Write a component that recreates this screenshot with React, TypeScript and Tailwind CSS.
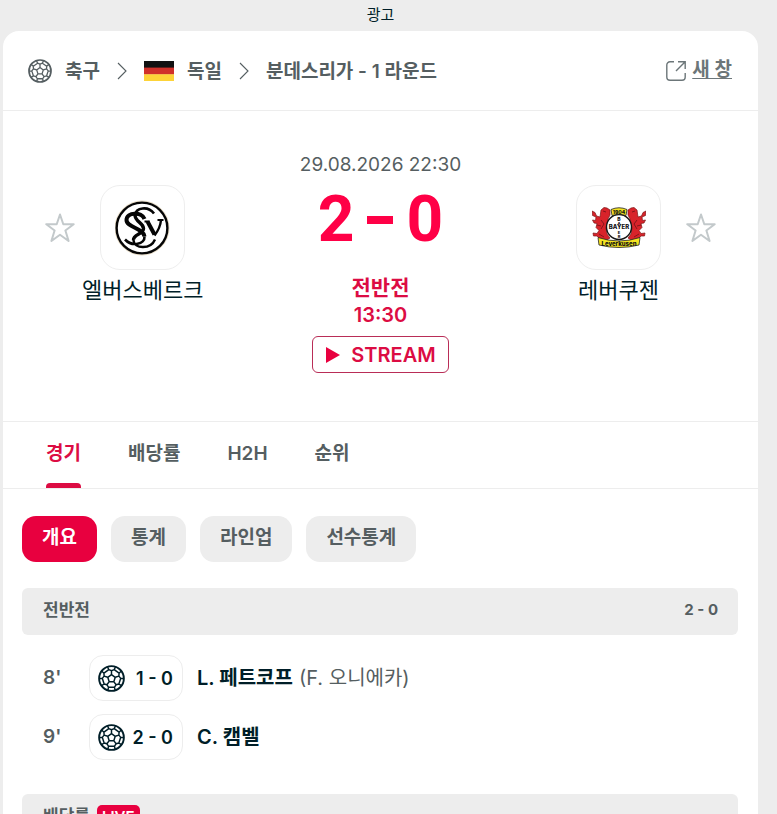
import React from "react";

const point = (radius: number, degrees: number) => {
  const a = (degrees * Math.PI) / 180;
  return `${(12 + radius * Math.cos(a)).toFixed(2)} ${(12 + radius * Math.sin(a)).toFixed(2)}`;
};

const directions = [-90, -18, 54, 126, 198];

const ballSeams =
  `M${directions.map((d) => point(3.5, d)).join("L")}Z` +
  directions
    .map(
      (d) =>
        `M${point(3.5, d)}L${point(6.9, d)}` +
        `M${point(11, d - 19)}L${point(8.2, d - 17)}L${point(6.9, d)}L${point(8.2, d + 17)}L${point(11, d + 19)}` +
        `M${point(8.2, d + 17)}L${point(8.2, d + 55)}`,
    )
    .join("");

function Ball({ className }: { className: string }) {
  return (
    <svg viewBox="0 0 24 24" fill="none" stroke="currentColor" strokeWidth="1.7" className={className} aria-hidden="true">
      <circle cx="12" cy="12" r="11" />
      <path d={ballSeams} strokeWidth="1.3" strokeLinejoin="round" />
    </svg>
  );
}

function Chevron() {
  return (
    <svg viewBox="0 0 10 18" className="h-[18px] w-[10px] text-[#555e61]" fill="none" stroke="currentColor" strokeWidth="1.1" aria-hidden="true">
      <path d="M1 1l8 8-8 8" />
    </svg>
  );
}

function GermanFlag() {
  return (
    <svg viewBox="0 0 30 20" className="h-5 w-[30px]" aria-hidden="true">
      <rect width="30" height="7" fill="#111" />
      <rect y="6.6" width="30" height="7" fill="#d0302a" />
      <rect y="13.3" width="30" height="6.7" fill="#fdd338" />
    </svg>
  );
}

function NewWindowIcon() {
  return (
    <svg viewBox="0 0 20 20" className="size-5" fill="none" stroke="currentColor" strokeWidth="1.4" aria-hidden="true">
      <path d="M8 .8H4A3.2 3.2 0 0 0 .8 4v12A3.2 3.2 0 0 0 4 19.2h12a3.2 3.2 0 0 0 3.2-3.2V12" />
      <path d="M12 .8h7.2V8M19.2 .8L10 10" />
    </svg>
  );
}

function Star() {
  return (
    <svg viewBox="0 0 30 30" className="size-[30px]" fill="none" stroke="#c3c9cb" strokeWidth="2" strokeLinejoin="round" aria-hidden="true">
      <path d="M15 1.500l3.300 9.700h10.400l-8.300 6.300 3.200 10.500-8.600-6.300-8.600 6.300 3.200-10.500-8.300-6.300h10.400z" />
    </svg>
  );
}

function ElversbergCrest() {
  return (
    <svg viewBox="0 0 56 56" className="size-14" fill="none" stroke="#050505" aria-hidden="true">
      <circle cx="27" cy="28" r="27" stroke="#e9dcc3" strokeWidth="1" />
      <circle cx="27" cy="28" r="25.400" strokeWidth="2.400" />
      <path d="M39 13.500C33 5.500 21 7.500 20 15" strokeWidth="2.600" />
      <path d="M20 15c0 7 8.500 7.500 8.500 13.500S18 34 18.500 40" strokeWidth="3.400" />
      <path d="M18.500 40c.5 9 17 10 21.500-.5" strokeWidth="2.400" />
      <path d="M29.500 19C27 11.500 11.500 12 11.500 20c0 7.500 17 8 18 16.500" strokeWidth="4" />
      <path d="M29.500 36.500C30 44.500 17 47 10 39.500" strokeWidth="2.600" />
      <path d="M29.500 21.500h5M42.500 20h6" strokeWidth="1.800" />
      <path d="M32.500 21.500l7 13" strokeWidth="4" />
      <path d="M39.500 35.500C43 31 45.500 26 46 20" strokeWidth="2.400" />
    </svg>
  );
}

function Lion() {
  return (
    <g>
      <path
        d="M9 3l3-2.500 3 .5 3 2v5l-2 4 1 4-3 5 1 6 3 4-3 2-7-1-3-3H1.500l-.5-3 4 .5 2-3-3-3 1-4-3-.5-1.500-3 3 .5L4 10 .5 8.500 0 4l3 1.500L4.500 9 8 10z"
        fill="#d8232a"
        stroke="#7c1717"
        strokeWidth=".7"
        strokeLinejoin="round"
      />
      <path d="M11 4l3 1M9 13l3 4-3 5M7 27l5 3M5 18l4 1" stroke="#7c1318" strokeWidth=".9" fill="none" />
    </g>
  );
}

function LeverkusenCrest() {
  return (
    <svg viewBox="0 0 54 42" className="h-[42px] w-[54px]" aria-hidden="true">
      <Lion />
      <g transform="translate(54 0) scale(-1 1)">
        <Lion />
      </g>
      <circle cx="27" cy="20" r="12.500" fill="#fff" stroke="#151515" strokeWidth="1.400" />
      <path d="M19 2.500q8-3.500 16 0l-1 6q-7-3-14 0z" fill="#f4e321" stroke="#222" strokeWidth=".8" />
      <path d="M6 30.500q21 7 42 0l-1 7.500q-20 5-40 0z" fill="#f4e321" stroke="#222" strokeWidth=".8" />
      <g fill="#111" fontFamily="Inter, sans-serif" fontWeight="800" textAnchor="middle">
        <text x="27" y="7" fontSize="5">1904</text>
        <text x="27" y="22.300" fontSize="6">BAYER</text>
        <text x="27" y="13.600" fontSize="5">B</text>
        <text x="27" y="17.600" fontSize="4">A</text>
        <text x="27" y="26.600" fontSize="4">E</text>
        <text x="27" y="31" fontSize="4">R</text>
        <text x="27" y="38.800" fontSize="6">Leverkusen</text>
      </g>
    </svg>
  );
}

function FavouriteButton({ team }: { team: string }) {
  return (
    <button type="button" aria-label={team}>
      <Star />
    </button>
  );
}

function Team({ name, children }: { name: string; children: React.ReactNode }) {
  return (
    <>
      <a href="#team" className="flex size-[85px] items-center justify-center rounded-[20px] border border-[#eee]">
        {children}
      </a>
      <a href="#team" className="text-[22px] leading-10 whitespace-nowrap text-[#001e28]">
        {name}
      </a>
    </>
  );
}

const tabs = ["경기", "배당률", "H2H", "순위"];
const views = ["개요", "통계", "라인업", "선수통계"];
const goals = [
  { minute: "8'", score: "1 - 0", player: "L. 페트코프", assist: "(F. 오니에카)" },
  { minute: "9'", score: "2 - 0", player: "C. 캠벨", assist: "" },
];

export default function App() {
  return (
    <div className="h-screen overflow-hidden bg-[#ededed] pr-[19px] pl-[3px] font-['Inter','Noto_Sans_CJK_KR',sans-serif] text-[#555e61]">
      <div className="h-[31px] text-center text-[15px] leading-[30px] text-[#001e28]">광고</div>
      <main className="min-h-full rounded-t-2xl bg-white">
        <header className="flex h-20 items-center justify-between border-b border-[#ededed] pr-[26px] pl-[25px] text-[19px] font-semibold">
          <nav className="flex items-center">
            <Ball className="mr-[13px] size-6" />
            <a href="#football" className="pt-1">축구</a>
            <span className="mx-[17px]"><Chevron /></span>
            <GermanFlag />
            <a href="#germany" className="ml-[13px] pt-1">독일</a>
            <span className="mx-[17px]"><Chevron /></span>
            <a href="#league" className="pt-1">분데스리가 - 1 라운드</a>
          </nav>
          <a href="#window" className="flex items-center gap-[6px] text-[#6c7679]">
            <NewWindowIcon />
            <span className="underline underline-offset-2">새 창</span>
          </a>
        </header>

        <section className="grid h-[311px] grid-cols-[1fr_auto_1fr] border-b border-[#ededed] px-[42px]">
          <div className="flex pt-[74px]">
            <div className="pt-7"><FavouriteButton team="엘버스베르크" /></div>
            <div className="ml-[7px] flex flex-col items-center">
              <Team name="엘버스베르크"><ElversbergCrest /></Team>
            </div>
          </div>
          <div className="flex flex-col items-center pt-10 text-[#dc0c43]">
            <time className="text-[19px] leading-7 text-[#555e61]">29.08.2026 22:30</time>
            <div className="flex h-[82px] items-center gap-[13px] font-['Roboto'] text-[64px] font-bold text-[#ff0046]">
              <span>2</span>
              <span className="h-2 w-[26px] bg-[#ff0046]" />
              <span>0</span>
            </div>
            <span className="mt-[13px] text-[21px] leading-7 font-semibold">전반전</span>
            <span className="text-[20px] leading-[26px] font-semibold">13:30</span>
            <button type="button" className="mt-2 flex h-[37px] items-center gap-[10px] rounded-md border border-[#b92d57] px-3 text-[20px] font-semibold">
              <svg viewBox="0 0 16 18" className="h-[18px] w-4 fill-[#e8003f]" aria-hidden="true"><path d="M1 1l14 8-14 8z" /></svg>
              STREAM
            </button>
          </div>
          <div className="flex justify-end pt-[74px]">
            <div className="mr-[25px] flex flex-col items-center">
              <Team name="레버쿠젠"><LeverkusenCrest /></Team>
            </div>
            <div className="pt-7"><FavouriteButton team="레버쿠젠" /></div>
          </div>
        </section>

        <nav className="flex h-[67px] gap-[47px] border-b border-[#ededed] pl-[43px] text-[19px] font-semibold">
          {tabs.map((tab, i) => (
            <a key={tab} href="#tab" className={i === 0 ? "flex flex-col justify-between pt-3 text-[#dc0c43]" : "flex flex-col justify-between pt-3"}>
              <span className="leading-10">{tab}</span>
              {i === 0 && <span className="h-[5px] shrink-0 rounded-t bg-[#dc0c43]" />}
            </a>
          ))}
        </nav>

        <div className="pr-5 pl-[19px]">
          <div className="flex gap-[14px] pt-[27px] text-[19px] font-semibold">
            {views.map((view, i) => (
              <button
                key={view}
                type="button"
                className={
                  i === 0
                    ? "h-[46px] rounded-[14px] bg-[#e8003f] px-5 pb-0.5 text-white"
                    : "h-[46px] rounded-[14px] bg-[#ededed] px-5 pb-0.5"
                }
              >
                {view}
              </button>
            ))}
          </div>

          <div className="mt-[26px] flex h-[47px] items-center justify-between rounded-md bg-[#ededed] pr-5 pb-0.5 pl-[21px] text-[17px] font-semibold">
            <h2>전반전</h2>
            <span className="text-[15px] font-bold">2 - 0</span>
          </div>

          <ul className="mt-5 flex flex-col gap-[13px] text-[20px]">
            {goals.map((goal) => (
              <li key={goal.minute} className="flex h-[46px] items-center pl-[21px]">
                <span className="w-[46px] text-[19px] font-semibold">{goal.minute}</span>
                <span className="flex h-[46px] w-[94px] items-center justify-between rounded-[14px] border border-[#ededed] pr-[9px] pl-2 text-[18px] font-semibold text-[#001e28]">
                  <Ball className="size-[27px]" />
                  {goal.score}
                </span>
                <span className="ml-[14px] font-semibold text-[#001e28]">{goal.player}</span>
                <span className="ml-[6px]">{goal.assist}</span>
              </li>
            ))}
          </ul>

          <div className="mt-[34px] flex h-[47px] items-center gap-[7px] rounded-md bg-[#ededed] px-[21px] pb-0.5 text-[17px] font-semibold">
            <h2>배당률</h2>
            <span className="rounded-[5px] bg-[#e8003f] px-[5px] text-[15px] leading-6 text-white">LIVE</span>
          </div>
        </div>
      </main>
    </div>
  );
}
